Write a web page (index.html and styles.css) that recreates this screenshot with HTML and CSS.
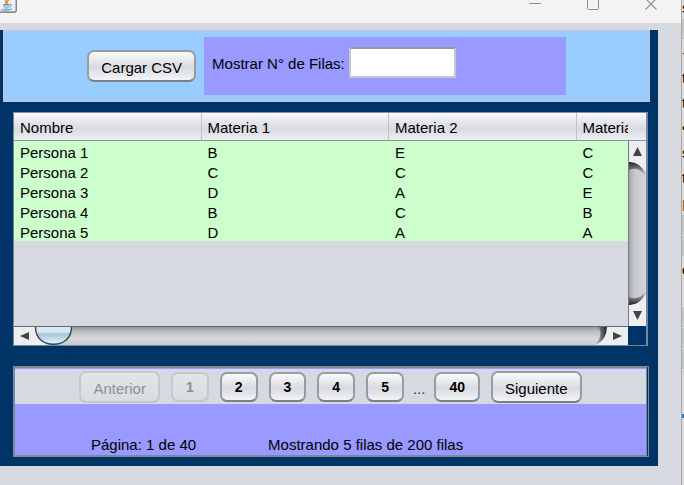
FILE: index.html
```html
<!DOCTYPE html>
<html lang="es">
<head>
<meta charset="utf-8">
<title>Cargar CSV</title>
<link rel="stylesheet" href="styles.css">
</head>
<body>
<div class="window">
  <header class="titlebar">
    <svg class="app-icon" width="17" height="13" viewBox="0 0 17 13" aria-hidden="true">
      <path d="M0 0H16V11Q16 12 15 12H0Z" fill="#eef1f5"/>
      <path d="M16.2 0V10.5Q16.2 12.2 14.5 12.2H0" fill="none" stroke="#557083" stroke-width="1.2"/>
      <path d="M6.5 0Q4.500 1.500 6.500 4M9 0Q5.500 1.500 8 4" fill="none" stroke="#f0872e" stroke-width="1.3"/>
      <path d="M3 4.500H9.500M3 6H9M4 8H8.500M1 9.500Q6 11 12 9" fill="none" stroke="#6f93ad" stroke-width="1.2"/>
      <path d="M9.500 4.500Q12.500 4 11 6.200L9 7.500" fill="none" stroke="#6f93ad"/>
    </svg>
    <div class="window-controls">
      <button aria-label="Minimizar"><svg width="12" height="14" viewBox="0 0 12 14"><path d="M0 7.500H12" stroke="#8c8c8c"/></svg></button>
      <button aria-label="Maximizar"><svg width="12" height="14" viewBox="0 0 12 14"><path d="M.5 0V12.500Q.5 13.500 1.500 13.500H10.500Q11.500 13.500 11.500 12.500V0" fill="none" stroke="#8c8c8c"/></svg></button>
      <button aria-label="Cerrar"><svg width="12" height="14" viewBox="0 0 12 14"><path d="M.5 2.500L11.500 13.500M11.500 2.500L.5 13.500" stroke="#8c8c8c" stroke-width="1.100"/></svg></button>
    </div>
  </header>

  <main class="content">
    <section class="toolbar">
      <button class="btn">Cargar CSV</button>
      <form class="row-count">
        <label for="rows">Mostrar N° de Filas:</label>
        <input id="rows" type="text">
      </form>
    </section>

    <section class="grid-pane">
      <div class="viewport">
        <table>
          <thead>
            <tr><th>Nombre</th><th>Materia 1</th><th>Materia 2</th><th>Materia 3</th></tr>
          </thead>
          <tbody>
            <tr><td>Persona 1</td><td>B</td><td>E</td><td>C</td></tr>
            <tr><td>Persona 2</td><td>C</td><td>C</td><td>C</td></tr>
            <tr><td>Persona 3</td><td>D</td><td>A</td><td>E</td></tr>
            <tr><td>Persona 4</td><td>B</td><td>C</td><td>B</td></tr>
            <tr><td>Persona 5</td><td>D</td><td>A</td><td>A</td></tr>
          </tbody>
        </table>
      </div>
      <div class="head-corner"></div>
      <div class="scroll-v">
        <button aria-label="Subir"><svg width="17" height="34" viewBox="0 0 17 34"><defs><linearGradient id="sv" x2="0" y2="1"><stop offset="0" stop-color="#222"/><stop offset="1" stop-color="#222" stop-opacity="0"/></linearGradient></defs><path d="M0 21Q10 20 17 33L15 34Q10 25 0 29Z" fill="url(#sv)"/><path d="M0 0H17V32Q10 20 0 21Z" fill="#eceef0"/><path d="M8.500 6L13 15H4Z" fill="#444"/></svg></button>
        <button aria-label="Bajar"><svg class="flip" width="17" height="34" viewBox="0 0 17 34"><path d="M0 21Q10 20 17 33L15 34Q10 25 0 29Z" fill="url(#sv)"/><path d="M0 0H17V32Q10 20 0 21Z" fill="#eceef0"/><path d="M8.500 6L13 15H4Z" fill="#444"/></svg></button>
      </div>
      <div class="scroll-h">
        <button aria-label="Izquierda"><svg width="60" height="18" viewBox="0 0 60 18"><defs><linearGradient id="th" x2="0" y2="1"><stop offset="0" stop-color="#dce9f2"/><stop offset=".3" stop-color="#d5e5f0"/><stop offset=".4" stop-color="#a9c5da"/><stop offset="1" stop-color="#e2f7ff"/></linearGradient></defs><path d="M0 0H22Q22 12 34 18H0Z" fill="#eceef0"/><path d="M21.500 0C21.500 11 29 17.300 39.500 17.300S57.500 11 57.500 0Z" fill="url(#th)"/><path d="M21.500 0C21.500 11 29 17.300 39.500 17.300S57.500 11 57.500 0" fill="none" stroke="#324756" stroke-width="1.400"/><path d="M6 9L15 5V13Z" fill="#444"/></svg></button>
        <button aria-label="Derecha"><svg width="36" height="18" viewBox="0 0 36 18"><defs><linearGradient id="sh"><stop offset="0" stop-color="#222" stop-opacity="0"/><stop offset="1" stop-color="#222"/></linearGradient></defs><path d="M7 0H15Q15 13 3 18Q11 9 7 0Z" fill="url(#sh)"/><path d="M15 0H36V18H4Q15 13 15 0Z" fill="#eceef0"/><path d="M30 9L21 5V13Z" fill="#444"/></svg></button>
      </div>
      <div class="corner"></div>
    </section>

    <section class="pager">
      <nav class="pages">
        <button class="btn" disabled>Anterior</button>
        <button class="btn page" disabled>1</button>
        <button class="btn page">2</button>
        <button class="btn page">3</button>
        <button class="btn page">4</button>
        <button class="btn page">5</button>
        <span class="dots">...</span>
        <button class="btn page">40</button>
        <button class="btn">Siguiente</button>
      </nav>
      <div class="status">
        <span>Página: 1 de 40</span>
        <span>Mostrando 5 filas de 200 filas</span>
      </div>
    </section>
  </main>
</div>

<aside class="behind">
  <span class="first">s</span><span class="shade"></span><span class="mark">-</span><span>t</span><span>t</span><span>•</span><span>s</span><span>t</span><span class="mark">p</span><span class="shade"></span><span class="shade"></span><span>c</span><span></span><span class="shade"></span><span class="shade"></span><span class="shade"></span><span></span><span class="bar"></span><span></span>
</aside>
</body>
</html>
```
FILE: styles.css
```css
* { box-sizing: border-box; }

body {
  display: flex;
  min-height: 100vh;
  margin: 0;
  overflow: hidden;
  background: #d6d9df;
  color: #000;
  font: 15px/20px "Liberation Sans", Arial, sans-serif;
}

button, input { font: inherit; color: inherit; }

.window { flex: 1; min-width: 0; }

.titlebar {
  display: flex;
  justify-content: space-between;
  height: 23px;
  padding-right: 24px;
  background: #f3f3f3;
}

.window-controls { display: flex; gap: 46px; }

.window-controls button,
.scroll-v button,
.scroll-h button {
  display: block;
  padding: 0;
  border: 0;
  background: none;
}

.window-controls svg,
.scroll-v svg,
.scroll-h svg { display: block; }

.window-controls button { align-self: flex-start; margin-top: -4px; }

.content {
  margin: 7px 23px 0 0;
  padding: 0 8px 9px 3px;
  background: #003366;
}

.toolbar {
  display: flex;
  justify-content: center;
  align-items: center;
  gap: 8px;
  height: 72px;
  border: 1px solid #c3c7cc;
  background: #99ccff;
}

.btn {
  height: 32px;
  padding: 3px 12px 0;
  border: 2px solid #989ba1;
  border-bottom-color: #7c7f85;
  border-radius: 7px;
  background: linear-gradient(#fafafb, #e4e6ea 35%, #d8dae0 55%, #f3f4f8);
  line-height: 25px;
}

.row-count {
  display: flex;
  align-items: flex-start;
  gap: 4px;
  height: 58px;
  padding: 10px 110px 0 8px;
  background: #9999ff;
}

.row-count label { padding-top: 7px; }

.row-count input {
  width: 107px;
  height: 31px;
  border: 2px solid #c5c7cc;
  border-top-color: #96979c;
  background: #fff;
}

.grid-pane {
  display: grid;
  grid-template-columns: minmax(0, 1fr) 18px;
  grid-template-rows: 27px 186px 19px;
  margin: 10px 2px 0 10px;
  border: 1px solid #73879c;
  border-top-color: #8c929b;
  border-right-width: 2px;
  background: #d6d9df;
}

.viewport { grid-row: 1 / 3; overflow: hidden; }

table {
  width: 750px;
  table-layout: fixed;
  border-collapse: separate;
  border-spacing: 0;
}

th, td { padding: 0 6px; text-align: left; font-weight: normal; }

th {
  height: 28px;
  padding-top: 2px;
  border-right: 1px solid #c0c3ca;
  border-bottom: 1px solid #8d9098;
}

th, .head-corner { background: linear-gradient(#fafafb, #e4e6ea 35%, #d9dbe1 60%, #eceef2); }

td { height: 20px; padding-top: 3px; line-height: 17px; background: #ccffcc; }

.scroll-v, .scroll-h { display: flex; justify-content: space-between; }

.scroll-v {
  flex-direction: column;
  border-top: 1px solid #8d9098;
  border-left: 1px solid #777a80;
  background: linear-gradient(90deg, #a4a6aa, #c7c8cc 35%, #d3d4d8);
}

.flip { transform: scaleY(-1); }

.scroll-h {
  border-top: 1px solid #65676b;
  background: linear-gradient(#96989c, #c2c3c7 30%, #d8d9dd 65%, #c8cacf);
}

.corner { background: #003366; }

.pager {
  margin: 20px 1px 0 10px;
  padding-top: 1px;
  border: 2px solid #808999;
  border-right: 3px double #808999;
  background: #9999ff;
  background-clip: padding-box;
}

.pages {
  display: flex;
  justify-content: center;
  align-items: center;
  gap: 11px;
  height: 35px;
  background: #d6d9df;
}

.btn.page {
  height: 30px;
  padding: 0 13px;
  font-size: 14px;
  font-weight: bold;
  line-height: 24px;
}

.btn:disabled {
  border-color: #c5c8cd;
  background: linear-gradient(#e1e4e8, #d9dce1);
  color: #8e8f91;
}

.dots { margin: 0 -2px; padding-top: 4px; color: #334; }

.status {
  display: flex;
  gap: 72px;
  padding: 31px 76px 0;
}

.behind {
  width: 3px;
  height: 485px;
  border-left: 1px solid #a7a8aa;
  background: #dedddb;
  overflow: hidden;
}

.behind span { display: block; height: 25px; line-height: 25px; overflow: hidden; }
.behind .first { height: 19px; line-height: 15px; }
.behind .shade { height: 21px; background: #c6c6c6; border-bottom: 1px solid #dedede; }
.behind .mark { color: #9b5b16; }
.behind .bar { height: 4px; margin: 19px 0; background: #3973ae; }
```
